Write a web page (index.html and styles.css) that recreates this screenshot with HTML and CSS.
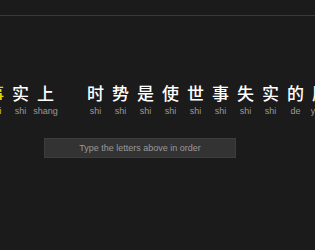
FILE: index.html
```html
<!DOCTYPE html>
<html lang="zh">
<head>
  <meta charset="UTF-8" />
  <title>打字练习</title>
  <link rel="stylesheet" href="styles.css">
</head>
<body>
  <div class="topbar"></div>

  <div class="stage">
    <div class="letters">
      <div class="letter current"><span class="hanzi">事</span><span class="pinyin">shi</span></div>
      <div class="letter"><span class="hanzi">实</span><span class="pinyin">shi</span></div>
      <div class="letter"><span class="hanzi">上</span><span class="pinyin">shang</span></div>
      <div class="letter blank"><span class="hanzi">&nbsp;</span><span class="pinyin">&nbsp;</span></div>
      <div class="letter"><span class="hanzi">时</span><span class="pinyin">shi</span></div>
      <div class="letter"><span class="hanzi">势</span><span class="pinyin">shi</span></div>
      <div class="letter"><span class="hanzi">是</span><span class="pinyin">shi</span></div>
      <div class="letter"><span class="hanzi">使</span><span class="pinyin">shi</span></div>
      <div class="letter"><span class="hanzi">世</span><span class="pinyin">shi</span></div>
      <div class="letter"><span class="hanzi">事</span><span class="pinyin">shi</span></div>
      <div class="letter"><span class="hanzi">失</span><span class="pinyin">shi</span></div>
      <div class="letter"><span class="hanzi">实</span><span class="pinyin">shi</span></div>
      <div class="letter"><span class="hanzi">的</span><span class="pinyin">de</span></div>
      <div class="letter"><span class="hanzi">原</span><span class="pinyin">yuan</span></div>
    </div>

    <div class="answer">
      <input type="text" class="answer-input" placeholder="Type the letters above in order">
    </div>
  </div>
</body>
</html>
```

FILE: styles.css
```css
html,
body {
  height: 100%;
}

body {
  background-color: #1b1b1b;
  color: #fff;
  font-family: 'Liberation Sans', 'Noto Sans CJK SC', sans-serif;
  margin: 0;
  overflow: hidden;
}

.topbar {
  height: 15px;
  border-bottom: 1px solid #3a3a3a;
}

.stage {
  padding-top: 66px;
}

.letters {
  display: flex;
  margin-left: -17px;
  white-space: nowrap;
}

.letter {
  flex: 0 0 25px;
  display: flex;
  flex-direction: column;
  align-items: center;
}

.hanzi {
  font-family: 'Noto Sans CJK SC', sans-serif;
  font-size: 17px;
  line-height: 22px;
  font-weight: 500;
}

.pinyin {
  font-size: 9px;
  line-height: 12px;
  margin-top: 1px;
  color: #9a9a9a;
}

.current .hanzi,
.current .pinyin {
  color: #e8d800;
}

.answer {
  padding: 21px 0 0 44px;
}

.answer-input {
  display: block;
  width: 192px;
  height: 20px;
  box-sizing: border-box;
  margin: 0;
  padding: 0 6px;
  border: 1px solid #3c3c3c;
  background-color: #333;
  color: #ddd;
  font-family: 'Liberation Sans', sans-serif;
  font-size: 9px;
  text-align: center;
  outline: none;
}

.answer-input::placeholder {
  color: #999;
}
```
